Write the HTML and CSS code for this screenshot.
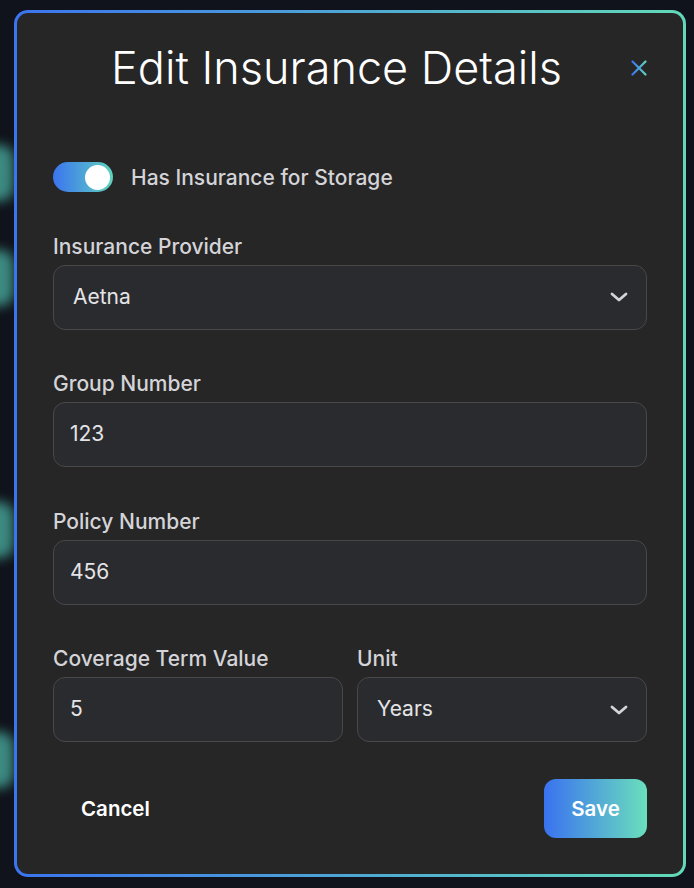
FILE: index.html
```html
<!DOCTYPE html>
<html lang="en">
<head>
<meta charset="utf-8">
<title>Edit Insurance Details</title>
<link rel="stylesheet" href="styles.css">
</head>
<body>
<div class="backdrop">
  <div class="blob blob-1"></div>
  <div class="blob blob-2"></div>
  <div class="blob blob-3"></div>
  <div class="blob blob-4"></div>
</div>
<div class="modal">
  <div class="header">
    <h1 class="title">Edit Insurance Details</h1>
    <button class="close" aria-label="Close">
      <svg width="16" height="16" viewBox="0 0 16 16">
        <defs>
          <linearGradient id="xg" x1="0" y1="0" x2="1" y2="0">
            <stop offset="0" stop-color="#3b74f0"/>
            <stop offset="1" stop-color="#5fd3bd"/>
          </linearGradient>
        </defs>
        <path d="M1.5 1.5 L14.5 14.5 M14.5 1.5 L1.5 14.5" stroke="url(#xg)" stroke-width="2.2" stroke-linecap="round" fill="none"/>
      </svg>
    </button>
  </div>
  <div class="form">
    <div class="toggle-row">
      <span class="toggle"><span class="knob"></span></span>
      <span class="toggle-label">Has Insurance for Storage</span>
    </div>
    <div class="field">
      <div class="label">Insurance Provider</div>
      <div class="control select">
        <span class="value select-value">Aetna</span>
        <svg class="chev" width="18" height="10" viewBox="0 0 18 10"><polyline points="2,2 9,8 16,2" fill="none" stroke="#d4d4d8" stroke-width="2.8" stroke-linecap="round" stroke-linejoin="round"/></svg>
      </div>
    </div>
    <div class="field">
      <div class="label">Group Number</div>
      <div class="control"><span class="value">123</span></div>
    </div>
    <div class="field">
      <div class="label">Policy Number</div>
      <div class="control"><span class="value">456</span></div>
    </div>
    <div class="row2">
      <div class="field">
        <div class="label">Coverage Term Value</div>
        <div class="control"><span class="value">5</span></div>
      </div>
      <div class="field">
        <div class="label">Unit</div>
        <div class="control select">
          <span class="value select-value">Years</span>
          <svg class="chev" width="18" height="10" viewBox="0 0 18 10"><polyline points="2,2 9,8 16,2" fill="none" stroke="#d4d4d8" stroke-width="2.8" stroke-linecap="round" stroke-linejoin="round"/></svg>
        </div>
      </div>
    </div>
  </div>
  <div class="actions">
    <button class="btn-cancel">Cancel</button>
    <button class="btn-save">Save</button>
  </div>
</div>
</body>
</html>
```
FILE: styles.css
```css
* { box-sizing: border-box; }
html, body { margin: 0; padding: 0; }
body {
  width: 694px;
  height: 888px;
  overflow: hidden;
  background: #10131b;
  font-family: Inter, "Noto Sans", sans-serif;
  position: relative;
}
.backdrop { position: absolute; inset: 0; z-index: 0; }
.blob {
  position: absolute;
  left: -30px;
  width: 44px;
  height: 56px;
  border-radius: 14px;
  background: #3c8a81;
  filter: blur(6px);
}
.blob-1 { top: 145px; }
.blob-2 { top: 250px; }
.blob-3 { top: 502px; }
.blob-4 { top: 732px; }

.modal {
  position: relative;
  z-index: 1;
  margin: 10px 0 0 14px;
  width: 672px;
  border: 3px solid transparent;
  border-radius: 14px;
  background:
    linear-gradient(#262626, #262626) padding-box,
    linear-gradient(90deg, #3b74f0, #62dab8) border-box;
  padding: 29px 36px 36px;
}
.header { display: flex; align-items: center; height: 52px; }
.title {
  flex: 1;
  margin: 0;
  text-align: center;
  font-size: 45px;
  line-height: 52px;
  font-weight: 300;
  color: #ffffff;
}
.close {
  width: 27px;
  height: 27px;
  padding: 0;
  border: none;
  background: none;
  display: flex;
  align-items: center;
  justify-content: flex-end;
}
.form {
  margin-top: 68px;
  display: flex;
  flex-direction: column;
  gap: 42.5px;
}
.toggle-row { display: flex; align-items: center; height: 30px; }
.toggle {
  width: 60px;
  height: 30px;
  border-radius: 15px;
  background: linear-gradient(90deg, #3b74f0, #5fd3bd);
  display: flex;
  align-items: center;
  justify-content: flex-end;
  padding-right: 3px;
}
.knob { width: 25px; height: 25px; border-radius: 50%; background: #ffffff; }
.toggle-label {
  margin-left: 18px;
  font-size: 21px;
  font-weight: 500;
  color: #d4d4d8;
}
.field { display: flex; flex-direction: column; min-width: 0; }
.label {
  font-size: 21px;
  line-height: 24px;
  font-weight: 500;
  color: #d4d4d8;
  margin-bottom: 6px;
}
.control {
  height: 65px;
  border: 1.5px solid #484849;
  border-radius: 12px;
  background: #2a2b2e;
  display: flex;
  align-items: center;
  padding: 0 16px 2px;
}
.control.select { padding: 0 18px 2px 19px; justify-content: space-between; }
.value { font-size: 21px; color: #e4e4e7; font-weight: 400; }
.chev { flex: none; margin-top: 2px; }
.row2 {
  display: grid;
  grid-template-columns: 1fr 1fr;
  gap: 14px;
}
.actions {
  margin-top: 37px;
  display: flex;
  justify-content: space-between;
  align-items: center;
}
.btn-cancel {
  height: 59px;
  padding: 0 28px;
  border: none;
  background: none;
  color: #ffffff;
  font-family: inherit;
  font-size: 20.5px;
  font-weight: 600;
}
.btn-save {
  width: 103px;
  height: 59px;
  border: none;
  border-radius: 12px;
  background: linear-gradient(90deg, #3a72f0, #6adfbc);
  color: #ffffff;
  font-family: inherit;
  font-size: 20.5px;
  font-weight: 600;
}
```
